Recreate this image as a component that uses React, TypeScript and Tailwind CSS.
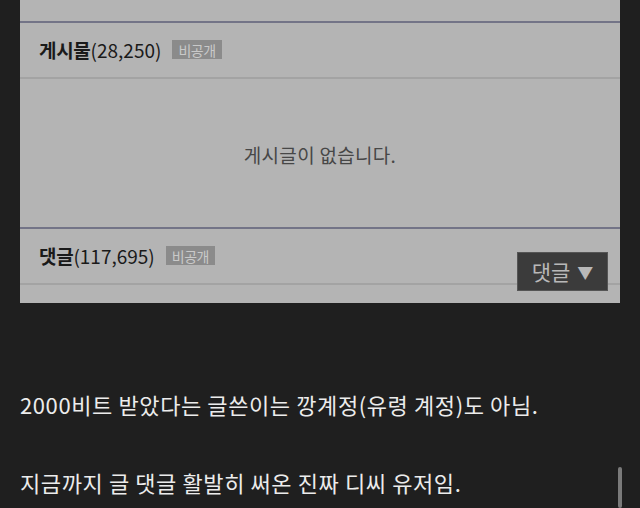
const font = { fontFamily: '"Noto Sans CJK KR", "Noto Sans", sans-serif' }

function Badge() {
  return (
    <span className="ml-[11px] mt-[-2px] inline-flex h-[19px] items-center bg-[#8b8b8b] px-[6px] text-[14px] leading-none tracking-[-0.5px] text-[#c9c9c9]">
      비공개
    </span>
  )
}

export default function App() {
  return (
    <div className="h-[508px] w-[640px] overflow-hidden bg-[#1f1f1f]" style={font}>
      <div className="relative ml-[20px] h-[303px] w-[600px] bg-[#b4b4b4]">
        <div className="h-[21px]" />
        <div className="h-[2px] bg-[#737487]" />
        <div className="flex h-[56px] items-center border-b-2 border-[#a3a3a3] pl-[19px] pt-[1px]">
          <span className="text-[19px] font-bold tracking-[-0.3px] text-[#1a1a1a]">게시물</span>
          <span className="text-[19px] tracking-[0px] text-[#1a1a1a]">(28,250)</span>
          <Badge />
        </div>
        <div className="flex h-[148px] items-center justify-center pt-[4px] text-[19px] tracking-[0.3px] text-[#474747]">
          게시글이 없습니다.
        </div>
        <div className="h-[2px] bg-[#737487]" />
        <div className="flex h-[56px] items-center border-b-2 border-[#a3a3a3] pl-[19px] pt-[1px]">
          <span className="text-[19px] font-bold tracking-[-0.3px] text-[#1a1a1a]">댓글</span>
          <span className="text-[19px] tracking-[0px] text-[#1a1a1a]">(117,695)</span>
          <Badge />
        </div>
        <div className="absolute left-[497px] top-[252px] flex h-[39px] w-[91px] items-center justify-center gap-[7px] border border-[#555] bg-[#3b3b3b] text-[21px] text-[#b8b8b8]">
          <span>댓글</span>
          <span className="text-[16px]">▼</span>
        </div>
      </div>
      <div className="mt-[86px] pl-[20px] text-[22px] leading-[30px] tracking-[0.6px] text-[#ececec]">
        2000비트 받았다는 글쓴이는 깡계정(유령 계정)도 아님.
      </div>
      <div className="mt-[48px] pl-[20px] text-[22px] leading-[30px] tracking-[0.6px] text-[#ececec]">
        지금까지 글 댓글 활발히 써온 진짜 디씨 유저임.
      </div>
      <div className="absolute left-[618px] top-[467px] h-[41px] w-[4px] rounded-full bg-[#7a7a7a]" />
    </div>
  )
}
